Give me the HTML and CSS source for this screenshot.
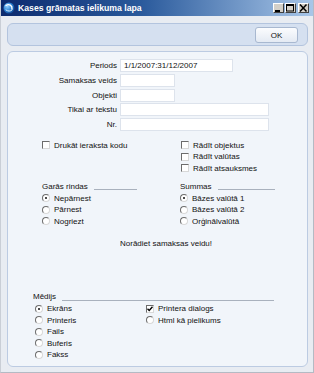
FILE: index.html
```html
<!DOCTYPE html>
<html>
<head>
<meta charset="utf-8">
<link rel="stylesheet" href="styles.css">
</head>
<body>
<div class="window">
  <div class="titlebar">
    <svg class="app-icon" width="12" height="12" viewBox="0 0 12 12">
      <defs>
        <radialGradient id="g" cx="0.35" cy="0.35" r="0.7">
          <stop offset="0" stop-color="#8fd0ff"/>
          <stop offset="0.6" stop-color="#2a7fd0"/>
          <stop offset="1" stop-color="#124a94"/>
        </radialGradient>
      </defs>
      <circle cx="6" cy="6" r="5.5" fill="url(#g)"/>
      <path d="M3 3.5 C6 1.5 9.5 3.5 9 7" stroke="#ffffff" stroke-width="1.4" fill="none" stroke-linecap="round"/>
      <path d="M3 8 C5 9.5 7.5 9.5 9 8" stroke="#dff1ff" stroke-width="1" fill="none" stroke-linecap="round"/>
    </svg>
    <span class="title">Kases grāmatas ielikuma lapa</span>
    <div class="controls">
      <span class="ctl"><svg width="9" height="8" viewBox="0 0 9 8"><rect x="1" y="6" width="5" height="2" fill="#000"/></svg></span>
      <span class="ctl"><svg width="9" height="8" viewBox="0 0 9 8"><rect x="0.5" y="0.5" width="7" height="6.5" fill="none" stroke="#000"/><rect x="0" y="0" width="8" height="2" fill="#000"/></svg></span>
      <span class="ctl close"><svg width="9" height="8" viewBox="0 0 9 8"><path d="M1 0.5 L7.5 7.5 M7.5 0.5 L1 7.5" stroke="#000" stroke-width="1.5"/></svg></span>
    </div>
  </div>
  <div class="client">
    <div class="toolbar">
      <button class="ok">OK</button>
    </div>
    <div class="panel">
      <div class="form">
        <div class="row"><label class="lbl">Periods</label><span class="input w-mid">1/1/2007:31/12/2007</span></div>
        <div class="row"><label class="lbl">Samaksas veids</label><span class="input w-short"></span></div>
        <div class="row"><label class="lbl">Objekti</label><span class="input w-short"></span></div>
        <div class="row"><label class="lbl">Tikai ar tekstu</label><span class="input w-long"></span></div>
        <div class="row"><label class="lbl">Nr.</label><span class="input w-long"></span></div>
      </div>

      <div class="checks">
        <div class="col">
          <div class="opt"><span class="cb"></span><span>Drukāt ieraksta kodu</span></div>
        </div>
        <div class="col">
          <div class="opt"><span class="cb"></span><span>Rādīt objektus</span></div>
          <div class="opt"><span class="cb"></span><span>Rādīt valūtas</span></div>
          <div class="opt"><span class="cb"></span><span>Rādīt atsauksmes</span></div>
        </div>
      </div>

      <div class="groups">
        <div class="col">
          <div class="head"><span>Garās rindas</span><span class="rule"></span></div>
          <div class="opt"><span class="rb on"></span><span>Nepārnest</span></div>
          <div class="opt"><span class="rb"></span><span>Pārnest</span></div>
          <div class="opt"><span class="rb"></span><span>Nogriezt</span></div>
        </div>
        <div class="col">
          <div class="head"><span>Summas</span><span class="rule"></span></div>
          <div class="opt"><span class="rb on"></span><span>Bāzes valūtā 1</span></div>
          <div class="opt"><span class="rb"></span><span>Bāzes valūtā 2</span></div>
          <div class="opt"><span class="rb"></span><span>Orģinālvalūtā</span></div>
        </div>
      </div>

      <div class="message">Norādiet samaksas veidu!</div>

      <div class="media">
        <div class="head wide"><span>Mēdijs</span><span class="rule"></span></div>
        <div class="media-cols">
          <div class="col">
            <div class="opt"><span class="rb on"></span><span>Ekrāns</span></div>
            <div class="opt"><span class="rb"></span><span>Printeris</span></div>
            <div class="opt"><span class="rb"></span><span>Fails</span></div>
            <div class="opt"><span class="rb"></span><span>Buferis</span></div>
            <div class="opt"><span class="rb"></span><span>Fakss</span></div>
          </div>
          <div class="col">
            <div class="opt"><span class="cb on"><svg width="6" height="6" viewBox="0 0 6 6"><path d="M0.5 2.8 L2.2 4.5 L5.5 0.8" stroke="#000" stroke-width="1.4" fill="none"/></svg></span><span>Printera dialogs</span></div>
            <div class="opt"><span class="rb"></span><span>Html kā pielikums</span></div>
          </div>
        </div>
      </div>
    </div>
  </div>
</div>
</body>
</html>
```

FILE: styles.css
```css
* { box-sizing: border-box; }

html, body {
  margin: 0;
  padding: 0;
}

body {
  width: 314px;
  height: 373px;
  overflow: hidden;
  font-family: "Liberation Sans", Arial, sans-serif;
  font-size: 8px;
  color: #111;
  background: #e6eaf0;
}

.window {
  width: 314px;
  height: 373px;
  display: flex;
  flex-direction: column;
  background: #e8ecf2;
  border-left: 1px solid #c9ced6;
  border-right: 1px solid #b4bac4;
  border-bottom: 1px solid #b4bac4;
}

.titlebar {
  height: 16px;
  flex: none;
  display: flex;
  align-items: center;
  padding-left: 2px;
  background: linear-gradient(to right, #0c2a6e 0%, #2a5a9c 45%, #a8c6e8 100%);
  color: #fff;
}

.app-icon {
  flex: none;
  margin-right: 3px;
}

.title {
  font-weight: bold;
  font-size: 8.7px;
  letter-spacing: 0;
  white-space: nowrap;
}

.controls {
  margin-left: auto;
  margin-right: 4px;
  display: flex;
  gap: 1px;
}

.ctl {
  width: 11px;
  height: 10px;
  display: flex;
  align-items: center;
  justify-content: center;
  background: #d4d0c8;
  border: 1px solid;
  border-color: #ffffff #404040 #404040 #ffffff;
}

.ctl.close {
  margin-left: 1px;
}

.client {
  flex: 1;
  display: flex;
  flex-direction: column;
  padding: 7px 5px 5px 6px;
}

.toolbar {
  height: 23px;
  flex: none;
  display: flex;
  justify-content: flex-end;
  align-items: flex-start;
  padding: 3px 9px 0 0;
  background: #d5e0f0;
  border: 1px solid #b3c4de;
  border-radius: 6px;
}

.ok {
  width: 43px;
  height: 16px;
  padding: 0;
  font-family: "Liberation Sans", Arial, sans-serif;
  font-size: 8px;
  color: #111;
  background: linear-gradient(#fbfcfe, #e4eaf3);
  border: 1px solid #a8b8d0;
  border-radius: 3px;
}

.panel {
  margin-top: 5px;
  flex: 1;
  background: #f1f5fa;
  border: 1px solid #bccbe2;
  border-radius: 6px;
  padding-top: 7px;
}

.form .row {
  display: flex;
  align-items: center;
  height: 13px;
  margin-bottom: 1.75px;
}

.lbl {
  width: 109px;
  text-align: right;
  margin-right: 3px;
  white-space: nowrap;
}

.input {
  height: 13px;
  display: flex;
  align-items: center;
  padding-left: 3px;
  background: #ffffff;
  border: 1px solid #dde3ec;
  white-space: nowrap;
}

.w-mid { width: 113px; }
.w-short { width: 55px; }
.w-long { width: 149px; }

.opt {
  height: 11.5px;
  display: flex;
  align-items: center;
  white-space: nowrap;
}

.cb, .rb {
  flex: none;
  width: 8px;
  height: 8px;
  margin-right: 4px;
  background: #fff;
  border: 1px solid;
  border-color: #6c6c6c #d8d8d8 #d8d8d8 #6c6c6c;
  display: flex;
  align-items: center;
  justify-content: center;
}

.rb {
  border-radius: 50%;
}

.rb.on::after {
  content: "";
  width: 2px;
  height: 2px;
  border-radius: 50%;
  background: #111;
}

.checks {
  margin-top: 8.5px;
  padding-left: 34px;
  display: grid;
  grid-template-columns: 139px 1fr;
}

.groups {
  margin-top: 5.5px;
  padding-left: 34px;
  display: grid;
  grid-template-columns: 138px 1fr;
}

.head {
  height: 13px;
  width: 95px;
  display: flex;
  align-items: center;
  white-space: nowrap;
}

.head .rule {
  flex: 1;
  height: 1px;
  margin-left: 6px;
  margin-top: 7px;
  background: #a9b1bd;
}

.message {
  margin-top: 10.5px;
  height: 11.5px;
  line-height: 11.5px;
  padding-left: 112px;
  white-space: nowrap;
}

.media {
  margin-top: 41px;
  padding-left: 25px;
}

.head.wide {
  width: 241px;
}

.media-cols {
  display: grid;
  grid-template-columns: 111px 1fr;
  padding-left: 2px;
}
```
